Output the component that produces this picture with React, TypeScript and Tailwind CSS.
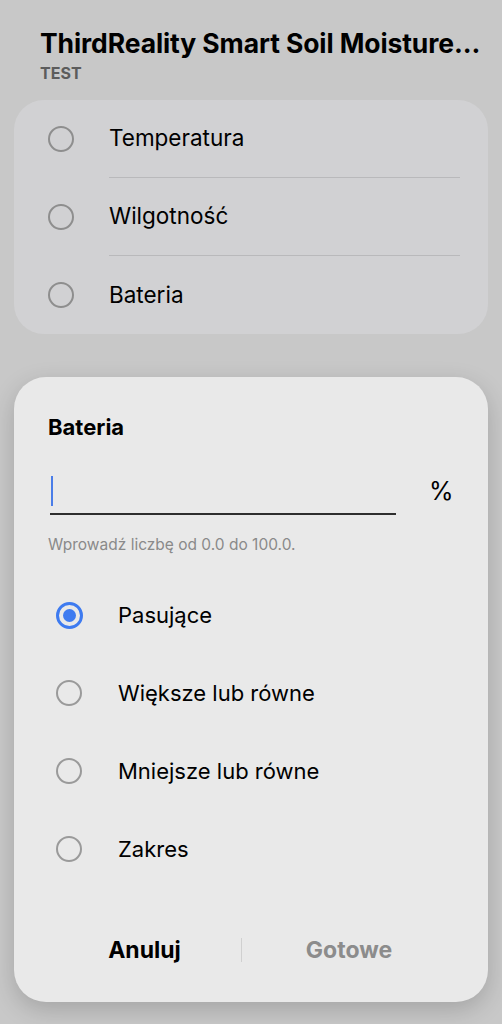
import React from "react";

const font = { fontFamily: "Inter, 'Noto Sans', sans-serif" };

const Radio = ({ checked = false }: { checked?: boolean }) =>
  checked ? (
    <span className="flex h-[27px] w-[27px] shrink-0 items-center justify-center rounded-full border-[3px] border-[#3e7bf0]">
      <span className="h-[13px] w-[13px] rounded-full bg-[#3e7bf0]" />
    </span>
  ) : (
    <span className="h-[26px] w-[26px] shrink-0 rounded-full border-2 border-[#9a9a9a]" />
  );

export default function App() {
  const fields = ["Temperatura", "Wilgotność", "Bateria"];
  const options = ["Pasujące", "Większe lub równe", "Mniejsze lub równe", "Zakres"];

  return (
    <div
      className="flex h-[1024px] w-full flex-col overflow-hidden bg-[#c8c8c8] text-black"
      style={font}
    >
      {/* Header */}
      <div className="px-[40px] pt-[25px]">
        <h1 className="whitespace-nowrap text-[26.5px] font-bold leading-[36px] tracking-[-0.1px]">
          ThirdReality Smart Soil Moisture...
        </h1>
        <p className="mt-[2px] text-[16px] font-bold leading-[20px] text-[#5c5c5c]">TEST</p>
      </div>

      {/* Fields card */}
      <div className="mx-[14px] mt-[17px] rounded-[30px] bg-[#d1d1d3]">
        {fields.map((f, i) => (
          <div key={f} className="flex h-[78px] items-center">
            <div className="flex w-[95px] justify-center">
              <span className="ml-[-1px] h-[26px] w-[26px] rounded-full border-2 border-[#8e8e8e]" />
            </div>
            <div
              className={
                "mr-[28px] flex h-full flex-1 items-center " +
                (i < fields.length - 1 ? "border-b border-[#b9b9bb]" : "")
              }
            >
              <span className="text-[22.5px] leading-none">{f}</span>
            </div>
          </div>
        ))}
      </div>

      {/* Dialog */}
      <div className="mx-[14px] mt-[43px] flex h-[625px] flex-col rounded-[32px] bg-[#e9e9e9] shadow-[0_8px_24px_rgba(0,0,0,0.18)]">
        <div className="px-[34px] pt-[36px]">
          <h2 className="text-[22px] font-bold leading-[28px]">Bateria</h2>

          <div className="mt-[34px] flex items-end">
            <div className="relative ml-[2px] h-[40px] w-[346px] border-b-2 border-[#2e2e2e]">
              <span className="absolute left-[1px] top-[1px] h-[30px] w-[2px] bg-[#4a7de8]" />
            </div>
            <span className="mb-[11px] ml-[33px] text-[25px] leading-none">%</span>
          </div>

          <p className="mt-[20px] text-[15.5px] leading-[20px] text-[#8a8a8a]">
            Wprowadź liczbę od 0.0 do 100.0.
          </p>
        </div>

        <div className="mt-[21px] flex flex-col">
          {options.map((o, i) => (
            <div key={o} className="flex h-[78px] items-center pl-[42px]">
              <Radio checked={i === 0} />
              <span className={"text-[22px] leading-none " + (i === 0 ? "ml-[35px]" : "ml-[36px]")}>{o}</span>
            </div>
          ))}
        </div>

        <div className="mt-[50px] flex items-center pl-[34px]">
          <button className="w-[193px] text-center text-[23px] font-bold leading-none text-black">
            Anuluj
          </button>
          <span className="h-[24px] w-px bg-[#d0d0d0]" />
          <button className="w-[214px] text-center text-[23px] font-bold leading-none text-[#8c8c8c]">
            Gotowe
          </button>
        </div>
      </div>
    </div>
  );
}
